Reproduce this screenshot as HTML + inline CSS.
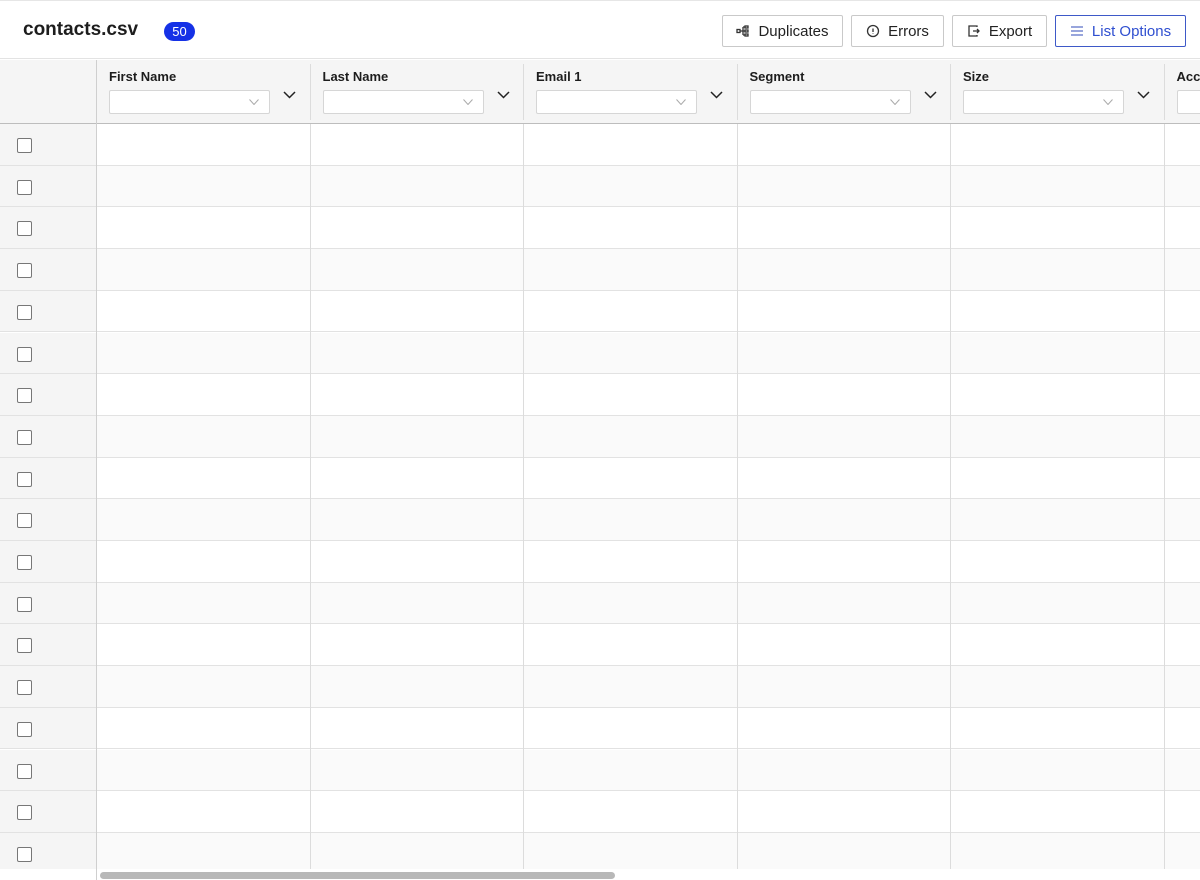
<!DOCTYPE html>
<html><head><meta charset="utf-8"><style>
*{box-sizing:border-box;margin:0;padding:0}
html,body{width:1200px;height:880px;overflow:hidden}
body{background:#fff;font-family:"Liberation Sans",Arial,sans-serif;position:relative;color:#1a1a1a}
#wrap{position:absolute;left:0;top:0;width:1200px;height:880px;overflow:hidden}
.top{position:absolute;left:0;top:0;width:1200px;height:59px;border-top:1px solid #e6e6e6;border-bottom:1px solid #e3e3e3}
.title{position:absolute;left:23px;top:18px;font-size:19px;font-weight:bold;color:#1d1d1d}
.badge{position:absolute;left:164px;top:21px;width:31px;height:19px;border-radius:10px;background:#1531e6;color:#fff;font-size:13px;text-align:center;line-height:19px}
.btn{position:absolute;top:14px;height:32px;border:1px solid #c9c9c9;border-radius:2px;background:#fff;font-size:15px;color:#222;display:flex;align-items:center;justify-content:center;gap:8px}
.btn.blue{border-color:#3e59c8;color:#2f4fd0}
.hdr{position:absolute;left:0;top:60px;width:1200px;height:64px;background:#f5f5f5;border-bottom:1px solid #bdbdbd}
.col{position:absolute;top:60px;height:64px;overflow:hidden}
.col b{position:absolute;left:12px;top:9px;font-size:13px;color:#1d1d1d;white-space:nowrap}
.col .sel{position:absolute;left:12px;top:30px;width:161px;height:24px;background:#fff;border:1px solid #d6d6d6;border-radius:2px}
.col .sel svg{position:absolute;right:10px;top:8px}
.col .dd{position:absolute;left:186px;top:26px}
.vl{position:absolute;width:1px;background:#dcdcdc}
.row{position:absolute;left:0;width:1200px;border-bottom:1px solid #e2e2e2}
.cb{position:absolute;left:17px;width:15px;height:15px;border:1.5px solid #777;border-radius:2px;background:#fff}
</style></head><body><div id="wrap">
<div class="top">
<div class="title">contacts.csv</div>
<div class="badge">50</div>
<div class="btn" style="left:722px;width:121px"><svg width="14" height="12" viewBox="0 0 14 12" fill="none" stroke="#333" stroke-width="1.3"><rect x="1" y="4.5" width="3" height="3"/><path d="M4 6h3M7 2v8M7 2h2M7 6h2M7 10h2"/><rect x="9" y="1" width="3" height="2"/><rect x="9" y="5" width="3" height="2"/><rect x="9" y="9" width="3" height="2"/></svg>Duplicates</div>
<div class="btn" style="left:851px;width:93px"><svg width="14" height="14" viewBox="0 0 14 14" fill="none" stroke="#333" stroke-width="1.3"><circle cx="7" cy="7" r="5.5"/><path d="M7 4.5v3.5M7 9.5v.5"/></svg>Errors</div>
<div class="btn" style="left:952px;width:95px"><svg width="14" height="14" viewBox="0 0 14 14" fill="none" stroke="#333" stroke-width="1.3"><path d="M10 3V2H2v10h8v-1"/><path d="M6 7h6M10 5l2 2-2 2"/></svg>Export</div>
<div class="btn blue" style="left:1055px;width:131px"><svg width="14" height="12" viewBox="0 0 14 12" fill="none" stroke="#5a6fc8" stroke-width="1.3"><path d="M1 2h12M1 6h12M1 10h12"/></svg>List Options</div>
</div>
<div class="hdr"></div>
<div id="cols"></div>
<div id="rows" style="position:absolute;left:0;top:0;width:1200px;height:869px;overflow:hidden"></div>
<div style="position:absolute;left:96px;top:60px;width:1px;height:820px;background:#cfcfcf"></div>
<div style="position:absolute;left:100px;top:872px;width:515px;height:7px;border-radius:4px;background:#b8b8b8"></div>
</div>
<script>
var names=["First Name","Last Name","Email 1","Segment","Size","Account"];
var xs=[97,310.5,524,737.5,951,1164.5];var h="";
var chev='<svg width="10" height="6" viewBox="0 0 10 6" fill="none" stroke="#aaa" stroke-width="1"><path d="M0.5 0.5L5 5.5 9.5 0.5"/></svg>';
var dd='<svg width="13" height="8" viewBox="0 0 13 8" fill="none" stroke="#222" stroke-width="1.5"><path d="M1 1l5.5 5.5L12 1"/></svg>';
for(var i=0;i<6;i++){var w=Math.min(213,1200-xs[i]);h+='<div class="col" style="left:'+xs[i]+'px;width:'+w+'px"><b>'+names[i]+'</b><div class="sel">'+chev+'</div><div class="dd">'+dd+'</div></div>';}
for(var i=1;i<6;i++){h+='<div class="vl" style="left:'+Math.round(xs[i]-1)+'px;top:64px;height:56px"></div>';}
document.getElementById("cols").innerHTML=h;
var r="";var rh=41.7;
for(var k=0;k<18;k++){var t=124+k*rh;r+='<div class="row" style="top:'+t+'px;height:'+rh+'px;background:'+(k%2?'#fafafa':'#fff')+'"><div style="position:absolute;left:0;top:0;width:96px;height:100%;background:#f5f5f5"></div><div class="cb" style="top:14px"></div></div>';}
for(var i=1;i<6;i++){r+='<div class="vl" style="left:'+Math.round(xs[i]-1)+'px;top:124px;height:745px"></div>';}
document.getElementById("rows").innerHTML=r;
</script>
</body></html>
